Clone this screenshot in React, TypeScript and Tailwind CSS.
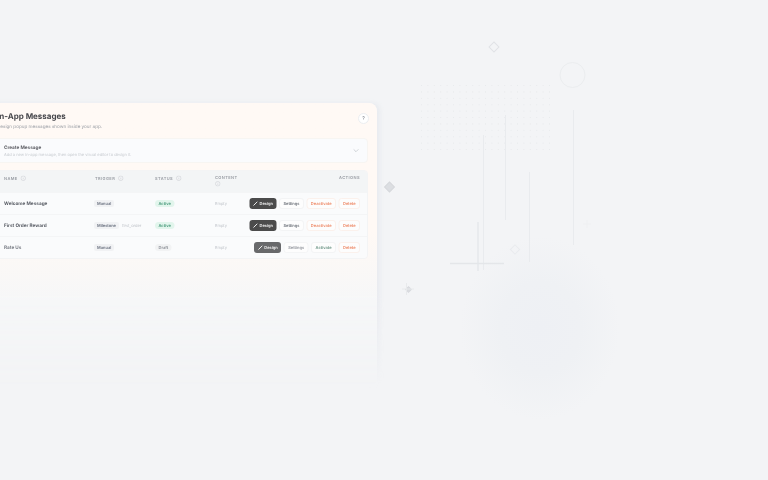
const Info = () => (
  <svg viewBox="0 0 10 10" className="w-[11px] h-[11px] shrink-0" fill="none" stroke="#c0c4ca" strokeWidth="0.8">
    <circle cx="5" cy="5" r="4.2" />
    <path d="M5 4.5v2.4M5 3v.4" />
  </svg>
);

const Pencil = () => (
  <svg viewBox="0 0 10 10" className="w-[10px] h-[10px]" fill="none" stroke="#fff" strokeWidth="1.8" strokeLinecap="round">
    <path d="M1.5 8.5 L8 2" />
  </svg>
);

const Btn = ({ label, kind, dim }: { label: string; kind: "design" | "plain" | "danger" | "ok"; dim?: boolean }) => {
  if (kind === "design")
    return (
      <div className={`h-[22px] w-[54px] flex items-center justify-center gap-[3px] rounded-[6px] text-[#f3f3f3] text-[8px] font-semibold ${dim ? "bg-[#68696b]" : "bg-[#4b4b4b]"}`}>
        <Pencil />
        {label}
      </div>
    );
  const cls =
    kind === "danger"
      ? "text-[#ee8a68] border-[#fbf1ec]"
      : kind === "ok"
        ? "text-[#6f9788] border-[#f3f4f5]"
        : dim
          ? "text-[#93979e] border-[#f4f5f6]"
          : "text-[#6f747c] border-[#f3f4f5]";
  return (
    <div className={`h-[22px] px-[7px] flex items-center justify-center rounded-[6px] border-2 bg-[#fdfdfd] text-[8px] font-semibold ${cls}`}>
      {label}
    </div>
  );
};

const Pill = ({ label }: { label: string }) => (
  <span className="h-[14px] px-[6px] flex items-center rounded-[4px] bg-[#f1f2f4] text-[#6b7280] text-[8px] font-semibold">{label}</span>
);

const Status = ({ label }: { label: string }) => (
  <span
    className={`h-[14px] px-[7px] flex items-center rounded-full text-[8px] font-semibold ${
      label === "Active" ? "bg-[#e2f5ec] text-[#4a9a7c]" : "bg-[#f2f3f4] text-[#8c9097]"
    }`}
  >
    {label}
  </span>
);

const rows = [
  { name: "Welcome Message", trigger: "Manual", extra: "", status: "Active", action: "Deactivate", dim: false },
  { name: "First Order Reward", trigger: "Milestone", extra: "first_order", status: "Active", action: "Deactivate", dim: false },
  { name: "Rate Us", trigger: "Manual", extra: "", status: "Draft", action: "Activate", dim: true },
];

const diamonds = [
  { x: 494, y: 47, s: 7, fill: "none", stroke: "#e0e2e6" },
  { x: 389.5, y: 187, s: 7, fill: "#dcdee2", stroke: "#d5d7db" },
  { x: 515, y: 249.5, s: 6.5, fill: "none", stroke: "#e9ebee" },
  { x: 408.5, y: 289.5, s: 4, fill: "#dadce0", stroke: "#d8dade" },
];

const Decor = () => {
  const dots: { x: number; y: number }[] = [];
  for (let r = 0; r < 11; r++) for (let c = 0; c < 21; c++) dots.push({ x: 421.5 + c * 6.4, y: 85.5 + r * 6.4 });
  return (
    <svg className="absolute inset-0 w-[768px] h-[480px]" viewBox="0 0 768 480">
      <defs>
        <radialGradient id="blob">
          <stop offset="0%" stopColor="#eef0f4" />
          <stop offset="50%" stopColor="#eff1f4" />
          <stop offset="100%" stopColor="#f3f4f6" />
        </radialGradient>
      </defs>
      <ellipse cx="540" cy="328" rx="80" ry="92" fill="url(#blob)" />
      {dots.map((d, i) => (
        <circle key={i} cx={d.x} cy={d.y} r="0.55" fill="#e7e9eb" />
      ))}
      <circle cx="572.5" cy="75" r="12.5" fill="none" stroke="#ebedef" strokeWidth="1" />
      {[
        [483.5, 135, 270],
        [505.5, 115, 220],
        [529.5, 172, 262],
        [573.5, 110, 245],
      ].map(([x, a, b]) => (
        <line key={x} x1={x} x2={x} y1={a} y2={b} stroke="#e9ebee" strokeWidth="1" />
      ))}
      <line x1="478" x2="478" y1="222" y2="271" stroke="#e6e8eb" strokeWidth="1.5" />
      <line x1="450" x2="504" y1="263.5" y2="263.5" stroke="#e4e6e9" strokeWidth="1.5" />
      {diamonds.map((d) => (
        <rect
          key={d.x}
          x={d.x - d.s / 2}
          y={d.y - d.s / 2}
          width={d.s}
          height={d.s}
          fill={d.fill}
          stroke={d.stroke}
          transform={`rotate(45 ${d.x} ${d.y})`}
        />
      ))}
      <path d="M402 289h12M406.5 283v12" stroke="#e8eaec" strokeWidth="1" />
      <path d="M583 224h8M587 220v8" stroke="#eff0f2" strokeWidth="1" />
    </svg>
  );
};

export default function App() {
  return (
    <div className="relative w-[768px] h-[480px] overflow-hidden bg-[#f3f4f6] font-['Inter',sans-serif] [text-rendering:geometricPrecision]">
      <Decor />
      <div className="relative pt-[103px] ml-[-13px] w-[397px] [mask-image:linear-gradient(to_bottom,black_290px,transparent_390px)]">
        <div className="w-[780px] h-[570px] origin-top-left scale-50 rounded-[16px] bg-gradient-to-b from-[#fff9f5] from-[45%] to-[#f6f7f8] to-[70%] shadow-[6px_0_8px_rgba(210,214,224,0.3)] px-[18px] blur-[0.8px]">
          <div className="flex justify-between pt-[14px] h-[70px]">
            <div className="pl-[2px]">
              <div className="text-[16px] leading-[24px] font-bold text-[#47474c] whitespace-nowrap">In-App Messages</div>
              <div className="text-[9.2px] leading-[16px] mt-[2px] text-[#9a9ea5] whitespace-nowrap">Design popup messages shown inside your app.</div>
            </div>
            <div className="w-[22px] h-[22px] mt-[6px] mr-[-2px] rounded-full border-2 border-[#eceef1] bg-white flex items-center justify-center text-[10px] text-[#80858d]">?</div>
          </div>
          <div className="h-[50px] rounded-[8px] border-2 border-[#f7f5f2] bg-[#fafbfd] flex items-center justify-between pl-[14px] pr-[16px] pb-[1px]">
            <div>
              <div className="text-[9.4px] leading-[14px] font-bold text-[#5f6066]">Create Message</div>
              <div className="text-[8px] leading-[12px] text-[#c8ccd1]">Add a new in-app message, then open the visual editor to design it.</div>
            </div>
            <svg viewBox="0 0 10 6" className="w-[12px] h-[8px]" fill="none" stroke="#b4b8be" strokeWidth="1"><path d="M1 1l4 4 4-4" /></svg>
          </div>
          <div className="mt-[14px] rounded-[8px] border-2 border-[#f3f4f5] overflow-hidden">
            <div className="h-[42px] flex items-start pt-[6px] bg-[#f3f5f6] text-[8px] leading-[12px] tracking-[0.8px] font-semibold text-[#989ca3] pl-[14px] pr-[14px]">
              <div className="w-[182px] shrink-0 flex items-center gap-[6px] mt-[2px]">NAME <Info /></div>
              <div className="w-[120px] shrink-0 flex items-center gap-[6px] mt-[2px]">TRIGGER <Info /></div>
              <div className="w-[120px] shrink-0 flex items-center gap-[6px] mt-[2px]">STATUS <Info /></div>
              <div className="w-[80px] shrink-0 flex flex-col items-start gap-[2px]"><span>CONTENT</span><Info /></div>
              <div className="flex-1 text-right">ACTIONS</div>
            </div>
            {rows.map((r) => (
              <div key={r.name} className="h-[44px] flex items-center border-t-2 border-[#f4f5f6] bg-[#fafbfc] pl-[14px] pr-[14px]">
                <div className={`w-[182px] shrink-0 text-[9.4px] font-bold ${r.dim ? "text-[#797d85]" : "text-[#5a5e66]"}`}>{r.name}</div>
                <div className="w-[120px] shrink-0 flex items-center gap-[6px] -ml-[2px] mr-[2px]">
                  <Pill label={r.trigger} />
                  {r.extra && <span className="text-[8px] text-[#c0c4ca]">{r.extra}</span>}
                </div>
                <div className="w-[120px] shrink-0 flex"><Status label={r.status} /></div>
                <div className="w-[60px] shrink-0 text-[8px] text-[#c0c4ca]">Empty</div>
                <div className="flex-1 flex justify-end gap-[5px]">
                  <Btn label="Design" kind="design" dim={r.dim} />
                  <Btn label="Settings" kind="plain" dim={r.dim} />
                  <Btn label={r.action} kind={r.action === "Activate" ? "ok" : "danger"} />
                  <Btn label="Delete" kind="danger" />
                </div>
              </div>
            ))}
          </div>
        </div>
      </div>
    </div>
  );
}
